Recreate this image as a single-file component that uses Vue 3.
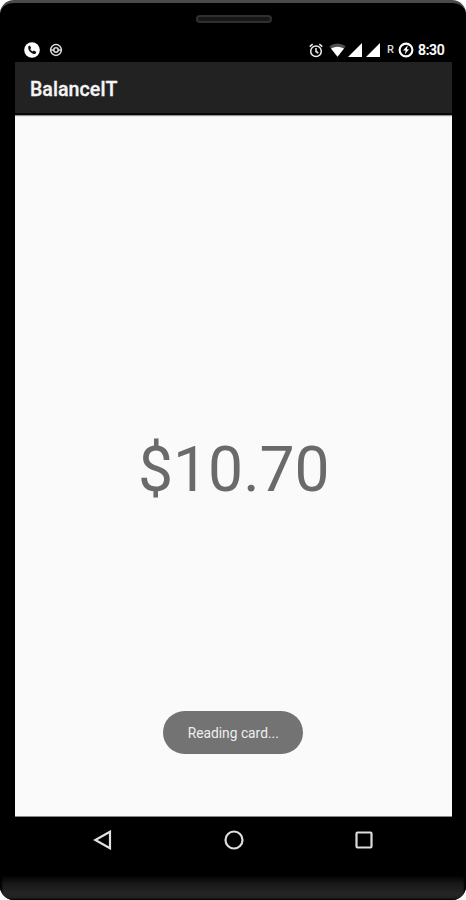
<template>
  <div class="phone">
    <div class="bezel-top">
      <div class="speaker"></div>
    </div>

    <div class="status">
      <div class="status-left">
        <svg width="16" height="16" viewBox="0 0 16 16">
          <circle cx="8" cy="8" r="7.8" fill="#fff" />
          <path d="M4.2 4.4L5.8 3.5L7.2 6L6.2 7.1Q7 8.7 8.7 9.6L9.8 8.5L12.3 10L11.5 11.8Q9.6 12.5 7.2 10.8Q3.8 8.2 4.2 4.4Z" fill="#111" />
        </svg>
        <svg width="14" height="14" viewBox="0 0 14 14" fill="none" stroke="#dcdcdc">
          <circle cx="7" cy="7" r="5.4" stroke-width="1.5" />
          <circle cx="7" cy="7" r="2.2" stroke-width="1.6" />
          <path d="M2 7H4.5M9.5 7H12" stroke-width="1.4" />
        </svg>
      </div>
      <div class="status-right">
        <svg class="alarm" width="14" height="15" viewBox="0 0 14 15" fill="none" stroke="#eee" stroke-width="1.5">
          <circle cx="7" cy="8.2" r="5.3" />
          <path d="M.7 3.6L3.7 1.1M13.3 3.6L10.3 1.1M7 5V8.5L9.3 10" />
        </svg>
        <svg class="wifi" width="17" height="14" viewBox="0 0 17 14">
          <path d="M.3 3.3Q8.5 -2.5 16.7 3.3L8.5 13.7Z" fill="#505050" />
          <path d="M2 5.4Q8.5 2 15 5.4L8.5 13.7Z" fill="#fff" />
        </svg>
        <svg v-for="n in 2" :key="n" class="signal" width="14" height="14" viewBox="0 0 14 14">
          <path d="M14 0V14H0Z" fill="#fff" />
        </svg>
        <span class="roaming">R</span>
        <svg class="battery" width="16" height="16" viewBox="0 0 16 16">
          <circle cx="8" cy="8" r="6.4" fill="none" stroke="#fff" stroke-width="2.1" />
          <path d="M9.8 3.3L5 8.5H7.6L6.8 12.5L11 7.3H8.9Z" fill="#fff" />
        </svg>
        <span class="clock">8:30</span>
      </div>
    </div>

    <div class="screen">
      <header class="appbar">
        <h1>BalanceIT</h1>
      </header>
      <main class="content">
        <div class="balance">{{ balance }}</div>
        <div class="toast"><span>Reading card...</span></div>
      </main>
    </div>

    <nav class="navbar">
      <svg width="20" height="20" viewBox="0 0 20 20">
        <path d="M17 1.7V18.3L2.3 10Z" />
      </svg>
      <svg width="20" height="20" viewBox="0 0 20 20">
        <circle cx="10" cy="10" r="8.5" />
      </svg>
      <svg width="20" height="20" viewBox="0 0 20 20">
        <rect x="2.5" y="2.5" width="15" height="15" rx="1" />
      </svg>
    </nav>

    <div class="bezel-bottom"></div>
  </div>
</template>

<script setup>
import { ref } from 'vue'

const balance = ref('$10.70')
</script>

<style>
body{margin:0;background:#fff}
</style>

<style scoped>
.phone{width:466px;height:900px;box-sizing:border-box;display:flex;flex-direction:column;background:#000;border-top:3px solid #4a4a4a;border-radius:14px;overflow:hidden;font-family:Roboto,"Liberation Sans",sans-serif}
.bezel-top{height:35px;flex-shrink:0;display:flex;justify-content:center;padding-top:12px;box-sizing:border-box}
.speaker{width:76px;height:8px;margin-left:1px;box-sizing:border-box;border:2px solid #303030;border-radius:4px;background:#171717}
.status{height:24px;flex-shrink:0;display:flex;justify-content:space-between;align-items:center;padding:0 21px 0 24px;color:#fff}
.status svg{display:block;flex-shrink:0}
.status-left{display:flex;align-items:center;gap:9px}
.status-right{display:flex;align-items:center}
.wifi{margin-left:6px}
.signal{margin-left:2px}
.signal + .signal{margin-left:4px}
.roaming{width:8px;margin-left:7px;font-size:11px;font-weight:500;line-height:16px;color:#ddd}
.battery{margin-left:3px}
.clock{width:27px;margin-left:4px;font-size:14px;font-weight:500;line-height:18px;letter-spacing:-.3px;-webkit-text-stroke:.2px #fff}
.screen{height:755px;flex-shrink:0;margin:0 14px 0 15px;display:flex;flex-direction:column;background:#fafafa}
.appbar{height:53px;flex-shrink:0;box-sizing:border-box;display:flex;align-items:center;padding:3px 15px 0;background:#222;border-bottom:2px solid #080808;box-shadow:0 1px 1px rgba(0,0,0,.4)}
.appbar h1{margin:0;font-size:20px;font-weight:500;line-height:24px;color:#f5f5f5;-webkit-text-stroke:.3px #f5f5f5;transform:scaleX(.98);transform-origin:left}
.content{flex:1;display:flex;flex-direction:column;align-items:center;border-bottom:1px solid #888}
.balance{margin-top:318px;font-size:63px;line-height:74px;color:#6a6a6a;transform:scaleX(.99)}
.toast{width:140px;height:43px;margin:204px 1px 0 0;display:flex;align-items:center;justify-content:center;background:#737373;border-radius:22px}
.toast span{font-size:15.5px;line-height:18px;color:#eee;white-space:nowrap;transform:scaleX(.89)}
.navbar{height:46px;flex-shrink:0;display:flex;justify-content:space-between;align-items:center;padding:0 92px 0 93px}
.navbar svg{fill:none;stroke:#ddd;stroke-width:2.2}
.bezel-bottom{flex:1;margin-top:12px;background:linear-gradient(#000,#181818 35%,#252525 75%,#202020);box-shadow:inset 2px 0 2px #000,inset -2px -1px 2px #000}
</style>
